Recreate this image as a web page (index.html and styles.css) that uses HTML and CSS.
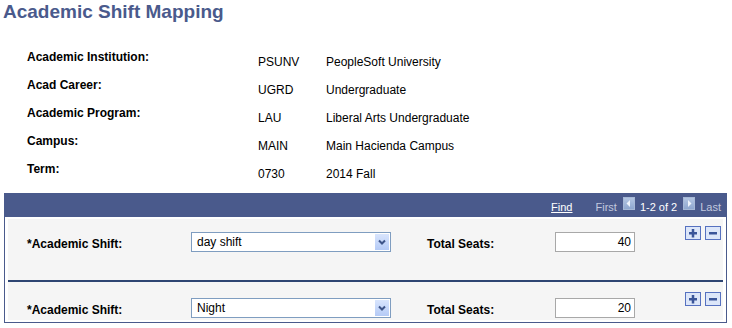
FILE: index.html
```html
<!DOCTYPE html>
<html lang="en">
<head>
  <meta charset="UTF-8" />
  <title>Academic Shift Mapping</title>
  <link rel="stylesheet" href="styles.css">
</head>
<body>
<h1 class="page-title">Academic Shift Mapping</h1>

<div class="summary">
  <div class="lbl">Academic Institution:</div><div class="val">PSUNV</div><div class="val">PeopleSoft University</div>
  <div class="lbl">Acad Career:</div><div class="val">UGRD</div><div class="val">Undergraduate</div>
  <div class="lbl">Academic Program:</div><div class="val">LAU</div><div class="val">Liberal Arts Undergraduate</div>
  <div class="lbl">Campus:</div><div class="val">MAIN</div><div class="val">Main Hacienda Campus</div>
  <div class="lbl">Term:</div><div class="val">0730</div><div class="val">2014 Fall</div>
</div>

<div class="grid-box">
  <div class="grid-head">
    <a class="find" href="#">Find</a>
    <span class="nav-off">First</span>
    <span class="nav-btn">
      <svg width="10" height="11" viewBox="0 0 10 11"><polygon points="6,2 6,9 2.5,5.5" fill="#eef3fb"/></svg>
    </span>
    <span class="count">1-2 of 2</span>
    <span class="nav-btn">
      <svg width="10" height="11" viewBox="0 0 10 11"><polygon points="4,2 4,9 7.5,5.5" fill="#eef3fb"/></svg>
    </span>
    <span class="nav-off">Last</span>
  </div>

  <div class="rows">
    <div class="row row-first">
      <div class="lbl row-lbl">*Academic Shift:</div>
      <div class="select">
        <span class="select-text">day shift</span>
        <span class="drop">
          <svg width="14" height="16" viewBox="0 0 14 16"><polyline points="4,6.5 7,9.5 10,6.5" fill="none" stroke="#3d5488" stroke-width="2"/></svg>
        </span>
      </div>
      <div class="lbl row-lbl">Total Seats:</div>
      <input class="num" type="text" value="40">
      <div class="row-btns">
        <span class="rbtn"><svg width="14" height="12" viewBox="0 0 14 12"><rect x="3" y="5" width="8" height="2.5" fill="#3a5599"/><rect x="5.75" y="2" width="2.5" height="8.5" fill="#3a5599"/></svg></span>
        <span class="rbtn"><svg width="14" height="12" viewBox="0 0 14 12"><rect x="3" y="5" width="8" height="2.5" fill="#3a5599"/></svg></span>
      </div>
    </div>

    <div class="row row-next">
      <div class="lbl row-lbl">*Academic Shift:</div>
      <div class="select">
        <span class="select-text">Night</span>
        <span class="drop">
          <svg width="14" height="16" viewBox="0 0 14 16"><polyline points="4,6.5 7,9.5 10,6.5" fill="none" stroke="#3d5488" stroke-width="2"/></svg>
        </span>
      </div>
      <div class="lbl row-lbl">Total Seats:</div>
      <input class="num" type="text" value="20">
      <div class="row-btns">
        <span class="rbtn"><svg width="14" height="12" viewBox="0 0 14 12"><rect x="3" y="5" width="8" height="2.5" fill="#3a5599"/><rect x="5.75" y="2" width="2.5" height="8.5" fill="#3a5599"/></svg></span>
        <span class="rbtn"><svg width="14" height="12" viewBox="0 0 14 12"><rect x="3" y="5" width="8" height="2.5" fill="#3a5599"/></svg></span>
      </div>
    </div>
  </div>
</div>
</body>
</html>
```

FILE: styles.css
```css
:root {
  --title-color: #4a5a8c;
  --band-color: #4a5a8c;
  --row-bg: #f5f5f5;
  --rule-color: #2e4572;
  --text-color: #000;
}

body {
  margin: 0;
  font-family: "Liberation Sans", Arial, sans-serif;
  font-size: 12px;
  line-height: 14px;
  color: var(--text-color);
  background: #fff;
}

.page-title {
  margin: 1px 0 0 3px;
  font-size: 19px;
  line-height: 22px;
  font-weight: bold;
  color: var(--title-color);
}

.summary {
  display: grid;
  grid-template-columns: 231px 68px auto;
  grid-auto-rows: 28px;
  margin: 27px 0 0 27px;
}

.lbl {
  font-weight: bold;
}

.val {
  padding-top: 5px;
}

.grid-box {
  width: 723px;
  box-sizing: border-box;
  margin: 3px 0 0 4px;
  border: 1px solid var(--band-color);
}

.grid-head {
  height: 23px;
  box-sizing: border-box;
  padding: 6px 5px 0 0;
  background: var(--band-color);
  display: flex;
  justify-content: flex-end;
  align-items: flex-start;
  font-size: 11px;
  line-height: 14px;
  color: #fff;
}

.find {
  color: #fff;
  text-decoration: underline;
  margin-right: 23px;
}

.nav-off {
  color: #c2c9df;
}

.nav-btn {
  width: 12px;
  height: 13px;
  margin: -3px 5px 0 6px;
  box-sizing: border-box;
  border: 1px solid #a6b8d6;
  background: linear-gradient(#b3c5e2, #8ea7cf);
  display: flex;
  align-items: center;
  justify-content: center;
}

.rows {
  padding: 2px 3px;
}

.row {
  display: grid;
  grid-template-columns: 164px 200px 36px 128px 80px 1fr;
  align-items: start;
  padding-left: 19px;
  padding-right: 2px;
  background: var(--row-bg);
}

.row-first {
  padding-top: 7px;
  padding-bottom: 28px;
}

.row-next {
  border-top: 2px solid var(--rule-color);
  padding-top: 10px;
  padding-bottom: 2px;
}

.row-lbl {
  margin-top: 11px;
}

.row .select {
  grid-column: 2;
}

.row .row-lbl + .select + .row-lbl {
  grid-column: 4;
}

.select {
  margin-top: 6px;
  height: 20px;
  box-sizing: border-box;
  border: 1px solid #7f9dc0;
  background: #fff;
  display: flex;
  align-items: flex-start;
  padding: 0 1px 0 0;
}

.select-text {
  flex: 1;
  padding-left: 5px;
  line-height: 18px;
}

.drop {
  width: 14px;
  height: 16px;
  margin-top: 1px;
  background: linear-gradient(#d9e5fd, #b4caf6);
  display: flex;
}

.num {
  margin: 6px 0 0 0;
  width: 80px;
  height: 20px;
  box-sizing: border-box;
  border: 1px solid #a8a8a8;
  padding: 0 3px 0 0;
  font: inherit;
  line-height: 18px;
  text-align: right;
  background: #fff;
  color: #000;
}

.row-btns {
  justify-self: end;
  display: flex;
  gap: 4px;
}

.rbtn {
  width: 16px;
  height: 14px;
  box-sizing: border-box;
  border: 1px solid #5671c0;
  background: #dce6f9;
  display: flex;
}
```
